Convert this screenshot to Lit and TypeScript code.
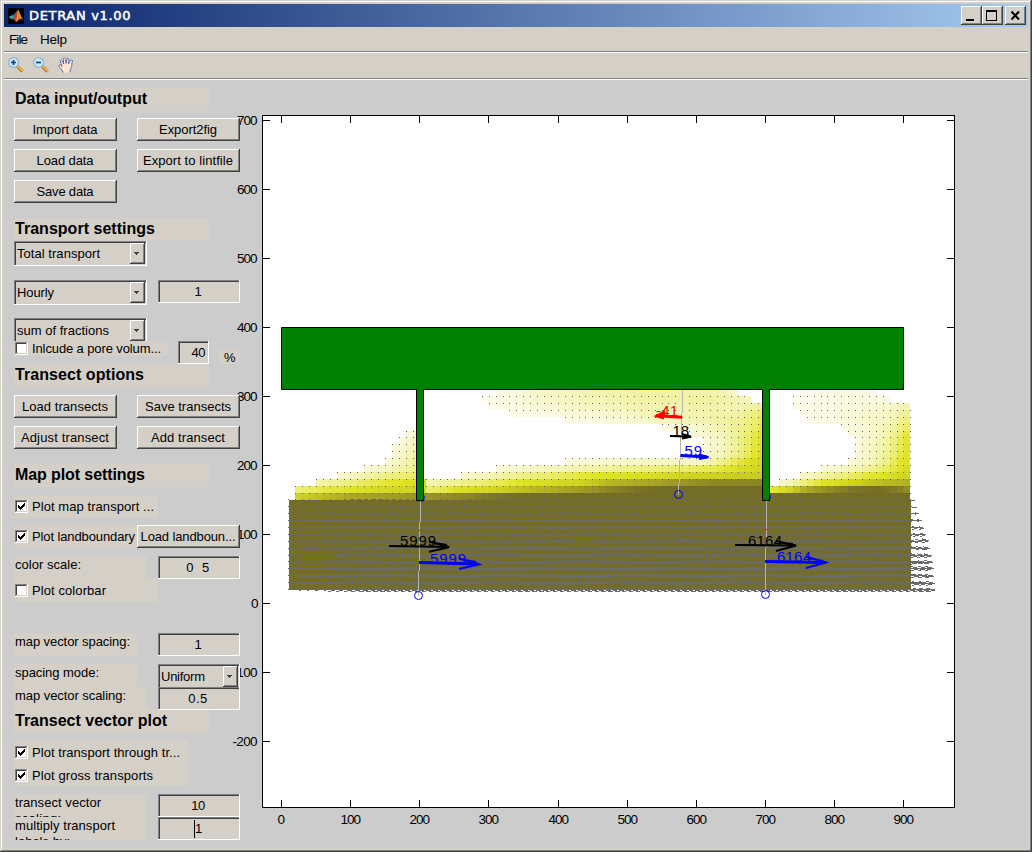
import { LitElement, html, svg, css, nothing } from "lit";
import { customElement } from "lit/decorators.js";

const UI_FONT = '"Liberation Sans", Arial, sans-serif';
const TITLE_FONT = '"DejaVu Sans", Verdana, sans-serif';
const ctx = document.createElement("canvas").getContext("2d")!;

/** Text whose tracking is computed so that it takes up the given width. */
function fit(text: string, width: number, font = `13px ${UI_FONT}`) {
  ctx.font = font;
  const spacing = (width - ctx.measureText(text).width) / Math.max(1, text.length - 1);
  return html`<span class="fit" style="letter-spacing:${spacing.toFixed(3)}px">${text}</span>`;
}

/* ---------- map data ---------- */

const X0 = 281.3;
const Y0 = 603;
const UNIT = 0.6913;
const px = (u: number) => X0 + u * UNIT;
const py = (u: number) => Y0 - u * 0.69;

// Each band is [start x, end x, ...[x, value]] in plot pixels; rows start at 150 and step by 10.
type Band = [number, number, [number, number][]];
const SIDE = (a: number, b: number, c: number): [number, number][] => [[867, a], [887, b], [900, c], [911, 4.2]];
const ROWS: Band[][] = [
  [
    [296, 416, [[296, 5], [328, 5.6], [350, 6], [415, 6.5]]],
    [424, 911, [[424, 6.5], [475, 7.1], [492, 7.6], [505, 7.8], [520, 8]]],
  ],
  [
    [296, 416, [[296, 2.8], [310, 3.2], [328, 3.6], [352, 4], [372, 4.6], [415, 5]]],
    [424, 428, [[424, 4.8]]],
    [428, 762, [[428, 3], [448, 3.6], [458, 4.2], [482, 4.7], [513, 5.3], [547, 5.8], [563, 6], [593, 6.6], [620, 7.3], [640, 7.8], [663, 8]]],
    [769, 911, [[770, 3.5], [783, 4.5], [793, 5.2], [807, 6], [830, 6.8], [850, 7.6], [877, 8], [900, 7.3], [911, 6.5]]],
  ],
  [
    [316, 416, [[316, 2], [338, 2.4], [358, 3], [375, 3.5], [392, 3.9], [413, 4.2]]],
    [424, 428, [[424, 4.8]]],
    [428, 762, [[428, 2], [448, 2.3], [468, 2.6], [485, 3], [508, 3.6], [520, 4], [547, 4.5], [580, 5], [613, 5.7], [647, 6], [680, 6.5], [713, 6.9], [762, 7]]],
    [779, 911, [[779, 1.3], [793, 2], [807, 3], [823, 4], [843, 4.7], [867, 5.3], [887, 5.6], [911, 5.8]]],
  ],
  [
    [337, 416, [[337, 1.3], [358, 1.8], [385, 2.6], [415, 3.2]]],
    [462, 762, [[462, 1.3], [488, 1.8], [523, 2.6], [563, 3.3], [597, 4], [630, 4.2], [663, 4.6], [687, 5], [762, 5.2]]],
    [800, 911, [[800, 1.3], [820, 2], [843, 2.8], [867, 3.7], [887, 4.2], [904, 5]]],
  ],
  [
    [364, 416, [[364, 1.2], [388, 1.7], [415, 2.6]]],
    [496, 762, [[496, 1.2], [547, 1.7], [580, 2], [630, 2.5], [663, 2.9], [697, 3.2], [720, 3.6], [745, 4.5], [762, 5]]],
    [821, 911, [[821, 1.2], [847, 1.6], [867, 2.3], [887, 3.2], [897, 4], [911, 4.7]]],
  ],
  [
    [385, 416, [[385, 1.2], [415, 2.3]]],
    [565, 762, [[565, 1.1], [613, 1.4], [647, 1.6], [680, 1.6], [697, 1.4], [720, 2.4], [738, 3.5], [750, 4.3], [762, 4.7]]],
    [848, 911, [[848, 1.1], ...SIDE(1.6, 2.6, 3.9)]],
  ],
  [
    [392, 416, [[392, 1.1], [415, 2.1]]],
    [703, 762, [[703, 1.2], [720, 1.8], [738, 2.7], [750, 3.6], [762, 4.4]]],
    [855, 911, [[855, 1.1], ...SIDE(1.5, 2.4, 3.6)]],
  ],
  [
    [392, 416, [[392, 1], [415, 1.9]]],
    [703, 762, [[703, 1.1], [720, 1.6], [738, 2.5], [750, 3.4], [762, 4.2]]],
    [855, 911, [[855, 1], ...SIDE(1.5, 2.3, 3.4)]],
  ],
  [
    [399, 416, [[399, 1], [415, 1.7]]],
    [703, 762, [[703, 1.1], [720, 1.6], [738, 2.5], [750, 3.3], [762, 4.1]]],
    [855, 911, [[855, 1], ...SIDE(1.4, 2.2, 3.3)]],
  ],
  [
    [406, 416, [[406, 1], [415, 1.4]]],
    [690, 762, [[690, 1.1], [720, 1.7], [738, 2.4], [750, 3.2], [762, 4]]],
    [848, 911, [[848, 1], ...SIDE(1.3, 2, 3)]],
  ],
  [
    [662, 762, [[662, 1], [700, 1.5], [720, 2], [750, 2.8], [762, 3.6]]],
    [842, 911, [[842, 1], [867, 1.3], [887, 1.9], [911, 3.3]]],
  ],
  [
    [565, 762, [[565, 0.9], [613, 1.1], [650, 1.5], [700, 2], [740, 2.4], [762, 3.3]]],
    [807, 911, [[807, 0.9], [850, 1.2], [887, 1.7], [911, 3]]],
  ],
  [
    [510, 762, [[510, 0.8], [570, 1.2], [620, 1.5], [660, 2], [700, 2], [740, 2.2], [762, 3]]],
    [800, 911, [[800, 0.8], [850, 1.2], [887, 1.6], [911, 2.6]]],
  ],
  [
    [489, 762, [[489, 0.8], [550, 1.3], [600, 1.7], [650, 2], [700, 2.1], [740, 2], [762, 2.3]]],
    [793, 911, [[793, 0.8], [850, 1.1], [887, 1.4], [911, 2]]],
  ],
  [
    [482, 752, [[482, 0.8], [530, 1.3], [600, 1.9], [660, 2.2], [720, 2.2], [752, 1.6]]],
    [793, 890, [[793, 0.5], [850, 1.1], [890, 1]]],
  ],
  [
    [496, 738, [[496, 0.9], [530, 1.4], [600, 2], [660, 2.2], [720, 2], [738, 1.4]]],
    [800, 876, [[800, 0.7], [850, 1.1], [876, 0.9]]],
  ],
];

const RAMP = [
  [255, 255, 255], [251, 251, 227], [243, 244, 175], [235, 237, 110], [224, 228, 36],
  [208, 212, 34], [170, 168, 36], [140, 134, 36], [116, 109, 38],
];
function colour(v: number) {
  const i = Math.min(7, Math.floor(v));
  const f = Math.min(1, v - i);
  return `rgb(${RAMP[i].map((c, k) => Math.round(c + (RAMP[i + 1][k] - c) * f)).join(",")})`;
}
function sample(points: [number, number][], x: number) {
  if (x <= points[0][0]) return points[0][1];
  for (let i = 1; i < points.length; i++) {
    if (x <= points[i][0]) {
      const [xa, va] = points[i - 1];
      const [xb, vb] = points[i];
      return va + ((vb - va) * (x - xa)) / (xb - xa);
    }
  }
  return points[points.length - 1][1];
}

function concentration() {
  const cells: unknown[] = [];
  let dots = "";
  ROWS.forEach((bands, r) => {
    const top = Math.max(389, Math.round(py(160 + r * 10)));
    const bottom = Math.round(py(150 + r * 10));
    for (const [from, to, pts] of bands) {
      for (let k = 1; k < 91; k++) {
        const a = Math.round(px(k * 10));
        const b = Math.round(px(k * 10 + 10));
        const mid = (a + b) / 2;
        if (mid < from - 1 || mid > to + 1) continue;
        cells.push(svg`<rect x=${a} y=${top} width=${b - a} height=${bottom - top} fill=${colour(sample(pts, mid))} />`);
        if (top > 390) dots += `M${a} ${top}h1v1h-1z`;
      }
      if (to === 911 && r > 0) dots += `M910 ${bottom}h1v1h-1z`;
    }
  });
  return svg`<g shape-rendering="crispEdges">${cells}<path d=${dots} fill="#5f5f5f" /></g>`;
}

function flowVectors() {
  const lengths = [3, 5, 7, 10, 13, 15, 18, 19, 21, 22, 23, 23, 24, 25];
  let d = "";
  lengths.forEach((full, r) => {
    const y = py(150 - r * 10) + 0.3;
    for (let k = 1; k <= 91; k++) {
      const x = px(k * 10);
      const len = full * Math.min(1, 0.45 + k * 0.06);
      const dy = r === 13 ? 0.6 : 0.3 + 0.6 * Math.sin(k * 0.35 + r * 1.7);
      const tx = x + len;
      const ty = y + dy;
      const hx = tx - len * 0.36;
      const hw = Math.min(r % 2 ? 1.7 : 2.1, len * 0.13);
      d += `M${x.toFixed(1)} ${y.toFixed(1)}L${tx.toFixed(1)} ${ty.toFixed(1)}`;
      if (k > 4) d += `M${hx.toFixed(1)} ${(ty - hw).toFixed(1)}L${tx.toFixed(1)} ${ty.toFixed(1)}L${hx.toFixed(1)} ${(ty + hw).toFixed(1)}`;
    }
  });
  return d;
}

/* ---------- widgets ---------- */

const heading = (text: string, w: number) =>
  html`<h2 class="heading">${fit(text, w, `bold 16px ${UI_FONT}`)}</h2>`;
const button = (text: string, w: number, cls = "") => html`<button class="btn ${cls}">${fit(text, w)}</button>`;
const label = (lines: [string, number][], cls = "") =>
  html`<div class="label ${cls}">${lines.map(([t, w]) => html`<div>${fit(t, w)}</div>`)}</div>`;
const edit = (text: string, w: number, cls = "") => html`<div class="edit ${cls}">${fit(text, w)}</div>`;
const select = (text: string, w: number, cls = "") => html`<div class="select ${cls}">
  <span class="value">${fit(text, w)}</span>
  <span class="drop"><svg width="5" height="3" viewBox="0 0 5 3" shape-rendering="crispEdges"><path d="M0 0h5v1h-1v1h-1v1h-1v-1h-1v-1h-1z" fill="#404040" /></svg></span>
</div>`;
const check = (text: string, w: number, on: boolean, cls = "") => html`<div class="check ${cls}">
  <span class="box">${on
    ? html`<svg width="9" height="9" viewBox="0 0 9 9" shape-rendering="crispEdges"><path d="M1 3v3h1v1h1v1h1v-1h1v-1h1v-1h1v-1h1v-3h-1v1h-1v1h-1v1h-1v1h-1v-1h-1v-1z" /></svg>`
    : nothing}</span>
  ${fit(text, w)}
</div>`;

@customElement("app-root")
export class AppRoot extends LitElement {
  static styles = css`
    :host {
      display: flex;
      flex-direction: column;
      box-sizing: border-box;
      width: 1032px;
      height: 852px;
      padding: 4px;
      overflow: hidden;
      background: #d4d0c8;
      box-shadow: inset -1px -1px #404040, inset 1px 1px #d4d0c8, inset -2px -2px #808080, inset 2px 2px #fff;
      font: 13px/15px "Liberation Sans", Arial, sans-serif;
      color: #000;
    }
    * { box-sizing: border-box; }
    .fit { white-space: pre; }
    .title {
      display: flex;
      align-items: center;
      height: 23px;
      padding: 0 2px 0 4px;
      background: linear-gradient(90deg, #0a246a, #a6caf0);
      color: #fff;
    }
    .title .name { flex: 1; padding-left: 5px; font: 13px/16px "DejaVu Sans", Verdana, sans-serif; -webkit-text-stroke: 0.5px #fff; }
    .winbtn {
      width: 21px;
      height: 19px;
      background: #d4d0c8;
      box-shadow: inset -1px -1px #404040, inset 1px 1px #fff, inset -2px -2px #808080;
    }
    .winbtn.close { margin-left: 2px; }
    .winbtn svg, .title > svg, .tools svg { display: block; }
    .menu, .tools { display: flex; border-bottom: 1px solid #808080; box-shadow: 0 1px #fff; margin-bottom: 1px; }
    .menu { height: 25px; padding: 5px 0 0 5px; gap: 13px; font-size: 13.5px; line-height: 16px; }
    .tools { height: 26px; padding: 4px 0 0 4px; gap: 9px; }
    .client { flex: 1; display: grid; background: #ccc; overflow: hidden; }
    .client > * { grid-area: 1 / 1; }
    .plot { display: block; z-index: 0; }
    .panel { z-index: 1; width: 236px; padding-left: 10px; }
    .row { display: flex; height: 23px; }
    .g7 { margin-top: 7px; }
    .g8 { margin-top: 8px; }
    .g13 { margin-top: 13px; }
    .g14 { margin-top: 14px; }
    .g15 { margin-top: 15px; }
    .g31 { margin-top: 31px; }
    .tall { height: 25px; }
    .clip { overflow: hidden; }
    .heading { margin: 0; width: 195px; padding-left: 1px; background: #d4d0c8; font-size: 16px; font-weight: bold; line-height: 21px; }
    .btn {
      flex: none;
      width: 103px;
      height: 23px;
      padding: 0 1px 0 0;
      border: 0;
      background: #d4d0c8;
      box-shadow: inset -1px -1px #404040, inset 1px 1px #fff, inset -2px -2px #808080;
      font: inherit;
      color: inherit;
      text-align: center;
    }
    .btn + .btn { margin-left: 20px; }
    .btn.over { margin-left: -21px; }
    .label { width: 133px; height: 23px; overflow: hidden; padding: 1px 0 0 1px; background: #d4d0c8; line-height: 16px; }
    .label.narrow { width: 123px; margin-right: 10px; }
    .edit {
      display: flex;
      align-items: center;
      justify-content: center;
      width: 82px;
      height: 23px;
      margin-left: 11px;
      padding-right: 2px;
      background: #d4d0c8;
      box-shadow: inset -1px -1px #fff, inset 1px 1px #808080, inset 2px 2px #404040;
    }
    .edit.small { width: 31px; margin-left: 10px; justify-content: flex-end; padding-right: 4px; }
    .caret { width: 1px; height: 18px; background: #000; }
    .pct { align-self: flex-end; width: 21px; height: 15px; margin-left: 10px; padding-left: 5px; background: #d4d0c8; line-height: 17px; }
    .select {
      display: flex;
      flex: none;
      width: 133px;
      height: 25px;
      padding: 2px;
      background: #d4d0c8;
      box-shadow: inset -1px -1px #fff, inset 1px 1px #808080, inset 2px 2px #404040;
    }
    .select .value { flex: 1; padding-left: 1px; line-height: 21px; }
    .select.mode { width: 82px; margin-left: 11px; }
    .drop {
      display: flex;
      align-items: center;
      justify-content: center;
      width: 15px;
      height: 21px;
      padding-right: 2px;
      box-shadow: inset -1px -1px #404040, inset 1px 1px #fff, inset -2px -2px #808080;
    }
    .check { display: flex; flex: none; align-items: center; gap: 4px; width: 144px; height: 23px; padding-left: 1px; background: #d4d0c8; }
    .check.wide { width: 174px; padding-top: 2px; }
    .check.low { width: 154px; height: 15px; }
    .box {
      width: 13px;
      height: 13px;
      padding: 2px;
      background: #fff;
      box-shadow: inset -1px -1px #fff, inset 1px 1px #808080, inset -2px -2px #d4d0c8, inset 2px 2px #404040;
    }
    .box svg { display: block; }
    .plot .tick { font: 13.5px "Liberation Sans", Arial, sans-serif; }
    .plot .flux { font: 15px "Liberation Sans", Arial, sans-serif; }
  `;

  private axes() {
    const ticks: unknown[] = [];
    for (let v = 0; v <= 900; v += 100) {
      const x = Math.round(px(v) - 0.3) + 0.5;
      const s = String(v);
      const w = s.length * 7 - 0.5;
      const tx = v ? x + 0.3 - w / 2 : x - 0.7 - w / 2;
      ticks.push(svg`<path d="M${x} 807V800M${x} 116V123" /><text class="tick" x=${tx} y="824.2" textLength=${w} stroke="none" fill="#000">${s}</text>`);
    }
    for (let v = -200; v <= 700; v += 100) {
      const y = Math.round(py(v) - 0.5) + 0.5;
      const s = String(v);
      const w = v < 0 ? 25 : s.length * 7 - 0.5;
      ticks.push(svg`<path d="M262 ${y}H270M954 ${y}H947" /><text class="tick" x=${257.5 - w} y=${y + 4.3} textLength=${w} stroke="none" fill="#000">${s}</text>`);
    }
    return svg`<rect x="262.5" y="115.5" width="692" height="692" fill="#fff" /><g stroke="#000" fill="none">
      <rect x="262.5" y="115.5" width="692" height="692" />${ticks}</g>`;
  }

  private arrow(c: string, w: number, shaft: string, head: string, text: string, x: number, y: number, len: number) {
    return svg`<path d=${shaft} stroke=${c} stroke-width=${w} fill="none" />
      <path d=${head} stroke=${c} stroke-width="2" fill="none" />
      <text class="flux" x=${x} y=${y} textLength=${len} fill=${c}>${text}</text>`;
  }

  private plot() {
    return html`<svg class="plot" width="1024" height="768" viewBox="4 80 1024 768">
      ${this.axes()}
      ${concentration()}
      <rect x="289" y="500" width="622" height="90" fill="#736d27" />
      <path d=${flowVectors()} stroke="#6a6a68" stroke-width="1" fill="none" shape-rendering="crispEdges" />
      <g fill="none" stroke="#00f">
        <circle cx="420.5" cy="497.5" r="4" /><circle cx="766.5" cy="496.5" r="4" />
      </g>
      <path d="M281.5 327.5H903.5V389.5H769.5V500.5H762.5V389.5H423.5V500.5H416.5V389.5H281.5Z" fill="#008000" stroke="#000" />
      <g fill="none" stroke="#b4b4b4" shape-rendering="crispEdges">
        <path d="M420.5 501V522M419.5 522V571M418.5 571V596" />
        <path d="M682.5 390V413M681.5 413V437M680.5 437V460M679.5 460V483M678.5 483V495" />
        <path d="M766.5 501V548M765.5 548V595" />
      </g>
      <path d="M419 530h1v1h-1zM766 529h1v1h-1z" fill="#f00" />
      <g fill="none" stroke="#00f">
        <circle cx="418.5" cy="595.5" r="4" /><circle cx="678.5" cy="494.5" r="4" /><circle cx="765.5" cy="594.5" r="4" />
      </g>
      ${this.arrow("#000", 2, "M389 546L449 547", "M429 541.5L449 547.3L429 551.8M432 542.5L447 545", "5999", 400, 546, 36)}
      ${this.arrow("#00f", 3, "M419 562.5L478 564", "M459 558.5L479 564.3L459 569M462 559.5L476 562", "5999", 430, 563.5, 36)}
      ${this.arrow("#000", 2, "M735 545L796 545.5", "M776 541L796 545.5L776 551M779 542.5L793 544", "6164", 748, 545.5, 34)}
      ${this.arrow("#00f", 3, "M765 561.5L826 562.5", "M806 556.5L826 562.5L806 568M809 558L823 561", "6164", 777, 562, 34)}
      ${this.arrow("#f00", 3, "M682 417.3L656 415.8", "M665 411.5L656 416L664 418.5M665 414.5L658 416", "-41", 656, 416, 22)}
      ${this.arrow("#000", 2, "M670 436L691 436.7", "M682 434L691 436.7L682 438.5M684 435.5H689", "18", 672.5, 436, 16.5)}
      ${this.arrow("#00f", 3, "M680.5 455.5L707 457", "M699 454.5L708.5 457.3L699 459M700 456.5H706", "59", 684.5, 456, 17.5)}
    </svg>`;
  }

  private panel() {
    return html`<div class="panel">
      <div class="row g8">${heading("Data input/output", 132)}</div>
      <div class="row g7">${button("Import data", 65)}${button("Export2fig", 58)}</div>
      <div class="row g8">${button("Load data", 57)}${button("Export to lintfile", 90)}</div>
      <div class="row g8">${button("Save data", 57)}</div>
      <div class="row g15">${heading("Transport settings", 140)}</div>
      <div class="row tall">${select("Total transport", 83)}</div>
      <div class="row tall g14">${select("Hourly", 37)}${edit("1", 7)}</div>
      <div class="row g13 clip">${select("sum of fractions", 92)}</div>
      <div class="row">${check("Inlcude a pore volum...", 129, false, "low")}${edit("40", 14, "small")}
        <div class="pct">%</div></div>
      <div class="row">${heading("Transect options", 129)}</div>
      <div class="row g8">${button("Load transects", 86)}${button("Save transects", 86)}</div>
      <div class="row g8">${button("Adjust transect", 88)}${button("Add transect", 74)}</div>
      <div class="row g15">${heading("Map plot settings", 130)}</div>
      <div class="row g8">${check("Plot map transport ...", 122, true)}</div>
      <div class="row g7">${check("Plot landboundary", 103, true)}${button("Load landboun...", 95, "over")}</div>
      <div class="row g8">${label([["color scale:", 66]])}${edit("0  5", 23)}</div>
      <div class="row">${check("Plot colorbar", 74, false)}</div>
      <div class="row g31">${label([["map vector spacing:", 115]], "narrow")}${edit("1", 7)}</div>
      <div class="row g8 clip">${label([["spacing mode:", 84]], "narrow")}${select("Uniform", 44, "mode")}</div>
      <div class="row">${label([["map vector scaling:", 111]])}${edit("0.5", 19)}</div>
      <div class="row">${heading("Transect vector plot", 152)}</div>
      <div class="row g7">${check("Plot transport through tr...", 148, true, "wide")}</div>
      <div class="row">${check("Plot gross transports", 121, true, "wide")}</div>
      <div class="row g8">${label([["transect vector", 86], ["scaling:", 46]])}${edit("10", 14)}</div>
      <div class="row">${label([["multiply transport", 100], ["labels by:", 55]])}
        <div class="edit"><span class="caret"></span>${fit("1", 7)}</div></div>
    </div>`;
  }

  private lens(plus: boolean) {
    return svg`<path d="M9.5 9.5L14.5 14.5" stroke="#b9772a" stroke-width="3.4" /><path d="M9.8 9.2L14.8 14.2" stroke="#f7b548" stroke-width="1.8" />
      <circle cx="5.5" cy="5.5" r="4.9" fill="#c9eafa" stroke="#8fb4d4" stroke-width="1.2" />
      <path d=${plus ? "M3 5.5H8M5.5 3V8" : "M3 5.5H8"} stroke="#123f86" stroke-width="1.7" />`;
  }

  render() {
    return html`
      <div class="title">
        <svg width="16" height="16" viewBox="0 0 16 16">
          <rect width="16" height="16" fill="#000" />
          <path d="M0.5 9L5 6.8L7 8.8L4 11.5Z" fill="#3d9aa6" />
          <path d="M5 6.8C7 6 8 3.5 10 1.5L8.5 7.5L4.5 11.5L6.5 8.5Z" fill="#2b6f94" />
          <path d="M10 1.5C8.5 4 8 8 4.2 11.4C6 11 7 12.6 8 14.5C9.8 13.5 10.8 11 12 10.5Z" fill="#c9431c" />
          <path d="M10 1.5C11.5 3.5 13 9 15.5 12.5C13.5 10.8 12.5 10.3 11 11.4C10.5 8 9.5 5 10 1.5Z" fill="#f08a24" />
          <path d="M9.6 4C9 7 9 10 8.2 13.6C9.2 12.8 9.8 11.8 10.6 11.2Z" fill="#f4b545" />
        </svg>
        <span class="name">${fit("DETRAN v1.00", 101.5, `13px ${TITLE_FONT}`)}</span>
        <div class="winbtn"><svg width="21" height="19" shape-rendering="crispEdges"><path d="M5 13h8v2h-8z" /></svg></div>
        <div class="winbtn"><svg width="21" height="19" shape-rendering="crispEdges"><path fill-rule="evenodd" d="M4 4h11v11h-11zM5 6v8h9v-8z" /></svg></div>
        <div class="winbtn close"><svg width="21" height="19"><path d="M6.5 5.5L14 13.5M14 5.5L6.5 13.5" stroke="#000" stroke-width="2" /></svg></div>
      </div>
      <div class="menu">${fit("File", 19, `13.5px ${UI_FONT}`)}${fit("Help", 27, `13.5px ${UI_FONT}`)}</div>
      <div class="tools">
        <svg width="16" height="16" viewBox="0 0 16 16">${this.lens(true)}</svg>
        <svg width="16" height="16" viewBox="0 0 16 16">${this.lens(false)}</svg>
        <svg width="16" height="16" viewBox="0 0 16 16">
          <path d="M5 15.5C4.5 13 2 11.5 0.8 9.2C0.5 8 2 7.6 3 8.6L4 9.5L2.2 4C2 2.7 3.6 2.3 4.2 3.6L5.6 7L5.4 1.8C5.5 0.4 7.2 0.4 7.5 1.8L8 6.4L9 1.9C9.4 0.7 11 1 10.9 2.3L10.5 6.8L12.6 3.4C13.4 2.4 14.8 3 14.4 4.2C13.5 7 14.5 9.5 12.5 12L12 15.5Z" fill="#fde3cf" />
          <path d="M5 15.5C4.5 13 2 11.5 0.8 9.2C0.5 8 2 7.6 3 8.6L4 9.5L2.2 4C2 2.7 3.6 2.3 4.2 3.6L5.6 7L5.4 1.8C5.5 0.4 7.2 0.4 7.5 1.8L8 6.4L9 1.9C9.4 0.7 11 1 10.9 2.3L10.5 6.8L12.6 3.4C13.4 2.4 14.8 3 14.4 4.2C13.5 7 14.5 9.5 12.5 12L12 15.5" fill="none" stroke="#3c5fae" stroke-width="1" stroke-dasharray="2 0.6" />
        </svg>
      </div>
      <div class="client">${this.plot()}${this.panel()}</div>
    `;
  }
}
